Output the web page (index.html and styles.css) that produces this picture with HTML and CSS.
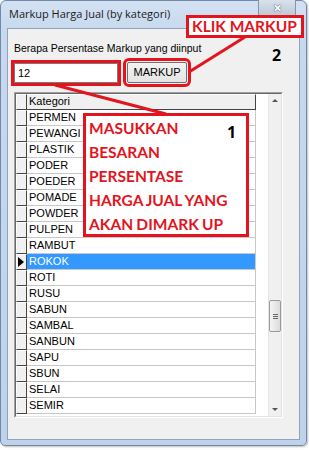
FILE: index.html
```html
<!DOCTYPE html>
<html>
<head>
<meta charset="utf-8">
<link rel="stylesheet" href="styles.css">
</head>
<body>
<div class="window">
  <div class="titlebar">
    <span class="title">Markup Harga Jual (by kategori)</span>
    <span class="close">&#x2715;</span>
  </div>
  <div class="client">
    <div class="label">Berapa Persentase Markup yang diinput</div>
    <div class="inputrow">
      <div class="textbox">12</div>
      <div class="button">MARKUP</div>
    </div>
    <div class="grid">
      <div class="gridbody">
        <div class="cols">
          <div class="row head"><div class="sel"></div><div class="cell">Kategori</div></div>
          <div class="row"><div class="sel"></div><div class="cell">PERMEN</div></div>
          <div class="row"><div class="sel"></div><div class="cell">PEWANGI</div></div>
          <div class="row"><div class="sel"></div><div class="cell">PLASTIK</div></div>
          <div class="row"><div class="sel"></div><div class="cell">PODER</div></div>
          <div class="row"><div class="sel"></div><div class="cell">POEDER</div></div>
          <div class="row"><div class="sel"></div><div class="cell">POMADE</div></div>
          <div class="row"><div class="sel"></div><div class="cell">POWDER</div></div>
          <div class="row"><div class="sel"></div><div class="cell">PULPEN</div></div>
          <div class="row"><div class="sel"></div><div class="cell">RAMBUT</div></div>
          <div class="row active"><div class="sel"><span class="arrow"></span></div><div class="cell">ROKOK</div></div>
          <div class="row"><div class="sel"></div><div class="cell">ROTI</div></div>
          <div class="row"><div class="sel"></div><div class="cell">RUSU</div></div>
          <div class="row"><div class="sel"></div><div class="cell">SABUN</div></div>
          <div class="row"><div class="sel"></div><div class="cell">SAMBAL</div></div>
          <div class="row"><div class="sel"></div><div class="cell">SANBUN</div></div>
          <div class="row"><div class="sel"></div><div class="cell">SAPU</div></div>
          <div class="row"><div class="sel"></div><div class="cell">SBUN</div></div>
          <div class="row"><div class="sel"></div><div class="cell">SELAI</div></div>
          <div class="row"><div class="sel"></div><div class="cell">SEMIR</div></div>
        </div>
        <div class="scrollbar">
          <div class="sarrow up"></div>
          <div class="strack"><div class="thumb"><span></span><span></span><span></span></div></div>
          <div class="sarrow down"></div>
        </div>
      </div>
    </div>
  </div>
  <svg class="lines" width="309" height="450" viewBox="0 0 309 450">
    <line x1="245" y1="37" x2="189" y2="72" stroke="#e3141d" stroke-width="3"/>
    <line x1="55" y1="85" x2="166" y2="114" stroke="#e3141d" stroke-width="3"/>
  </svg>
  <div class="note klik">KLIK MARKUP</div>
  <div class="num n2">2</div>
  <div class="note big">MASUKKAN<br>BESARAN<br>PERSENTASE<br>HARGA JUAL YANG<br>AKAN DIMARK UP<span class="num n1">1</span></div>
</div>
</body>
</html>
```
FILE: styles.css
```css
* { box-sizing: border-box; }
body {
  margin: 0;
  background: #ffffff;
  width: 309px;
  height: 450px;
  overflow: hidden;
  font-family: "Liberation Sans", Arial, sans-serif;
}
.window {
  position: relative;
  width: 307px;
  height: 446px;
  background: linear-gradient(#d3e1f2, #c8d9ee 30px, #bfd2ea);
  border: 1px solid #6f8aa8;
  border-radius: 6px 6px 5px 5px;
  padding: 0 6px 6px 6px;
  box-shadow: 1px 1px 2px rgba(0,0,0,0.25);
}
.titlebar {
  height: 27px;
  display: flex;
  align-items: flex-start;
  justify-content: space-between;
}
.title {
  font-family: "Open Sans", "DejaVu Sans", sans-serif;
  font-size: 11px;
  color: #1b1b1b;
  padding: 5px 0 0 2px;
}
.close {
  width: 38px;
  height: 18px;
  margin-top: -1px;
  margin-right: 4px;
  background: linear-gradient(#d9e2ec, #b9c6d5);
  border: 1px solid #8596ab;
  border-top: none;
  border-radius: 0 0 4px 4px;
  color: #ffffff;
  font-size: 11px;
  font-weight: bold;
  text-align: center;
  line-height: 16px;
  text-shadow: 0 0 1px #3a4b60, 0 0 1px #3a4b60;
}
.client {
  height: 412px;
  background: #f0f0f0;
  border: 1px solid #8fa3bd;
  padding: 0 0 0 6px;
}
.label {
  font-size: 10.5px;
  color: #000;
  margin-top: 13px;
  height: 13px;
  line-height: 13px;
}
.inputrow {
  display: flex;
  align-items: center;
  margin-top: 7px;
  gap: 9px;
}
.textbox {
  width: 104px;
  height: 20px;
  background: #fff;
  border: 1px solid #7a7a7a;
  font-size: 11px;
  line-height: 18px;
  padding-left: 3px;
  outline: 3px solid #e3141d;
  outline-offset: 0px;
}
.button {
  width: 60px;
  height: 21px;
  background: linear-gradient(#f2f2f2, #e4e4e4);
  border: 1px solid #707070;
  border-radius: 2px;
  font-size: 11px;
  line-height: 19px;
  text-align: center;
  outline: 3px solid #e3141d;
  outline-offset: 1px;
}
.grid {
  margin-top: 9px;
  width: 269px;
  height: 326px;
  border: 1px solid #a0a0a0;
  border-right-color: #fff;
  border-bottom-color: #fff;
  background: #fff;
}
.gridbody {
  height: 100%;
  border: 1px solid #696969;
  border-right-color: #e3e3e3;
  border-bottom-color: #e3e3e3;
  display: flex;
  justify-content: space-between;
}
.cols { display: flex; flex-direction: column; }
.row {
  display: flex;
  height: 16px;
}
.sel {
  width: 11px;
  height: 16px;
  background: #f0f0f0;
  border-right: 1px solid #444;
  border-bottom: 1px solid #444;
  border-top: 1px solid #fff;
  border-left: 1px solid #fff;
  position: relative;
}
.cell {
  width: 229px;
  height: 16px;
  border-right: 1px solid #c8c8c8;
  border-bottom: 1px solid #c8c8c8;
  font-size: 11px;
  line-height: 15px;
  padding-left: 2px;
  color: #000;
}
.head .cell {
  background: #f0f0f0;
  border-right: 1px solid #444;
  border-bottom: 1px solid #444;
  border-top: 1px solid #fff;
  line-height: 13px;
}
.active .cell {
  background: #3399ff;
  color: #fff;
}
.arrow {
  position: absolute;
  left: 1px;
  top: 2px;
  width: 0;
  height: 0;
  border-top: 5px solid transparent;
  border-bottom: 5px solid transparent;
  border-left: 6px solid #000;
}
.scrollbar {
  width: 13px;
  background: #f0f0f0;
  display: flex;
  flex-direction: column;
  border-left: 1px solid #e6e6e6;
}
.sarrow { height: 14px; position: relative; }
.sarrow::after {
  content: "";
  position: absolute;
  left: 3px;
  width: 0; height: 0;
  border-left: 3px solid transparent;
  border-right: 3px solid transparent;
}
.up::after { top: 5px; border-bottom: 3px solid #555; }
.down::after { top: 6px; border-top: 3px solid #555; }
.strack {
  flex: 1;
  padding-top: 192px;
}
.thumb {
  width: 12px;
  height: 32px;
  border: 1px solid #9a9a9a;
  border-radius: 2px;
  background: linear-gradient(90deg, #f4f4f4, #dcdcdc);
  display: flex;
  flex-direction: column;
  align-items: center;
  justify-content: center;
  gap: 1px;
}
.thumb span { width: 5px; height: 1px; background: #666; }
.lines {
  position: absolute;
  left: -1px;
  top: -1px;
  pointer-events: none;
}
.note {
  position: absolute;
  background: #fff;
  border: 3px solid #e3141d;
  color: #e3141d;
  font-family: Lato, "Open Sans", sans-serif;
  font-weight: bold;
}
.klik {
  left: 185px;
  top: 14px;
  width: 118px;
  height: 23px;
  font-size: 15.5px;
  line-height: 17px;
  padding-left: 3px;
  white-space: nowrap;
}
.big {
  left: 82px;
  top: 112px;
  width: 166px;
  height: 124px;
  font-size: 15.5px;
  line-height: 24px;
  padding: 0 0 0 3px;
  word-spacing: -0.5px;
  white-space: nowrap;
}
.num {
  position: absolute;
  font-family: "Open Sans", "DejaVu Sans", sans-serif;
  font-weight: bold;
  color: #000;
  font-size: 16px;
  word-spacing: 0;
}
.n2 { left: 271px; top: 43px; }
.n1 { left: 141px; top: 6px; line-height: 20px; }
```
